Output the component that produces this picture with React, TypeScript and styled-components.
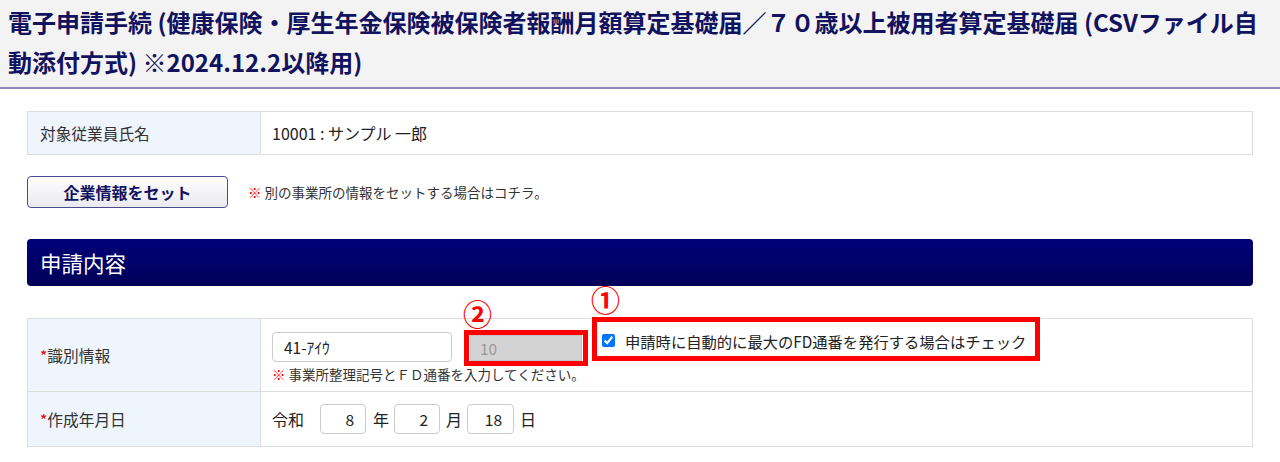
import React from 'react'
import styled, { createGlobalStyle } from 'styled-components'

const GlobalStyle = createGlobalStyle`
    html, body {
        margin: 0;
        padding: 0;
        background: #ffffff;
        font-family: "Noto Sans CJK JP", "Noto Sans", sans-serif;
        color: #333333;
    }
`

const StyledPage = styled.div`
    width: 1280px;
    display: flex;
    flex-direction: column;
`

const StyledTitleBand = styled.div`
    background: #f3f3f3;
    border-bottom: 2px solid #8c89bd;
    padding: 2px 0px 5px 8px;
`

const StyledTitle = styled.h1`
    margin: 0;
    font-size: 24px;
    line-height: 40px;
    font-weight: 700;
    color: #12125e;
    white-space: nowrap;
`

const StyledContent = styled.div`
    padding: 22px 27px 0px 27px;
    display: flex;
    flex-direction: column;
`

const StyledTable = styled.table<{ mt?: number }>`
    width: 100%;
    border-collapse: collapse;
    border: 1px solid #dddddd;
    ${props => props.mt !== undefined && `
        margin-top: ${props.mt}px;
    `}
`

const StyledLabelCell = styled.th<{ h: number }>`
    width: 220px;
    height: ${props => props.h}px;
    background: #eef5fc;
    border: 1px solid #dddddd;
    padding: 0px 0px 0px 12px;
    text-align: left;
    font-weight: 400;
    font-size: 15.7px;
    color: #333333;
    vertical-align: middle;
`

const StyledValueCell = styled.td`
    border: 1px solid #dddddd;
    padding: 0px 11px;
    font-size: 16px;
    color: #222222;
    vertical-align: middle;
`

const StyledRequired = styled.span`
    color: #e60000;
`

const StyledActionRow = styled.div`
    display: flex;
    align-items: center;
    margin-top: 21px;
    gap: 20px;
`

const StyledButton = styled.button`
    width: 201px;
    height: 32px;
    border: 1px solid #4b4a8c;
    border-radius: 4px;
    background: linear-gradient(#ffffff, #e9e9ef);
    font-family: inherit;
    font-size: 16px;
    font-weight: 700;
    color: #12125e;
    cursor: pointer;
`

const StyledNote = styled.span`
    font-size: 13.5px;
    color: #333333;
`

const StyledMark = styled.span`
    color: #ff0000;
    font-weight: 700;
    margin-right: 3px;
`

const StyledSectionHeader = styled.div`
    margin-top: 31px;
    height: 47px;
    border-radius: 4px;
    background: linear-gradient(#000078, #000058);
    color: #ffffff;
    font-size: 21.5px;
    display: flex;
    align-items: center;
    padding-left: 13px;
`

const StyledFieldStack = styled.div`
    display: flex;
    flex-direction: column;
    padding: 10px 0px 5px 0px;
`

const StyledInputRow = styled.div`
    display: flex;
    align-items: flex-start;
`

const StyledInput = styled.input<{ w: number; right?: boolean }>`
    box-sizing: border-box;
    width: ${props => props.w}px;
    height: 30px;
    border: 1px solid #cccccc;
    border-radius: 4px;
    padding: 0px 11px;
    font-family: inherit;
    font-size: 15.5px;
    color: #222222;
    background: #ffffff;
    ${props => props.right && `
        text-align: right;
    `}
`

const StyledDisabledInput = styled.input`
    box-sizing: border-box;
    width: 112px;
    height: 26px;
    border: 1px solid #c4c4c4;
    padding: 0px 9px;
    font-family: inherit;
    font-size: 15.5px;
    color: #999999;
    background: #d3d3d3;
`

const StyledAnnotated = styled.span<{ ml: number; mt: number }>`
    position: relative;
    display: inline-flex;
    align-items: center;
    margin-left: ${props => props.ml}px;
    margin-top: ${props => props.mt}px;
`

const StyledFrame = styled.span<{ inset: string }>`
    position: absolute;
    inset: ${props => props.inset};
    border: 5px solid #ff0000;
    pointer-events: none;
`

const StyledCircled = styled.span<{ top: number; left: number }>`
    position: absolute;
    top: ${props => props.top}px;
    left: ${props => props.left}px;
    font-size: 29px;
    line-height: 29px;
    font-weight: 700;
    color: #ff0000;
`

const StyledCheckLabel = styled.label`
    display: inline-flex;
    align-items: center;
    gap: 10px;
    font-size: 15.3px;
    color: #222222;
    line-height: 22px;
    white-space: nowrap;

    input {
        margin: 0;
        width: 13px;
        height: 13px;
    }
`

const StyledHint = styled.div`
    font-size: 13.5px;
    color: #333333;
    margin-top: 2px;
    line-height: 20px;
`

const StyledDateRow = styled.div`
    display: flex;
    align-items: center;
`

const StyledDateUnit = styled.span<{ ml: number; mr: number }>`
    margin-left: ${props => props.ml}px;
    margin-right: ${props => props.mr}px;
    font-size: 16px;
`

const App = () => {
    return (<>
        <GlobalStyle />
        <StyledPage>
            <StyledTitleBand>
                <StyledTitle>
                    電子申請手続 (健康保険・厚生年金保険被保険者報酬月額算定基礎届／７０歳以上被用者算定基礎届 (CSVファイル自<br />
                    動添付方式) ※2024.12.2以降用)
                </StyledTitle>
            </StyledTitleBand>

            <StyledContent>
                <StyledTable>
                    <tbody>
                        <tr>
                            <StyledLabelCell h={42}>対象従業員氏名</StyledLabelCell>
                            <StyledValueCell>10001 : サンプル 一郎</StyledValueCell>
                        </tr>
                    </tbody>
                </StyledTable>

                <StyledActionRow>
                    <StyledButton type="button">企業情報をセット</StyledButton>
                    <StyledNote><StyledMark>※</StyledMark>別の事業所の情報をセットする場合はコチラ。</StyledNote>
                </StyledActionRow>

                <StyledSectionHeader>申請内容</StyledSectionHeader>

                <StyledTable mt={32}>
                    <tbody>
                        <tr>
                            <StyledLabelCell h={72}><StyledRequired>*</StyledRequired>識別情報</StyledLabelCell>
                            <StyledValueCell>
                                <StyledFieldStack>
                                    <StyledInputRow>
                                        <StyledInput w={180} defaultValue="41-ｱｲｳ" />
                                        <StyledAnnotated ml={18} mt={3}>
                                            <StyledDisabledInput disabled value="10" readOnly />
                                            <StyledFrame inset="-5px -6px -5px -6px" />
                                            <StyledCircled top={-36} left={-7}>②</StyledCircled>
                                        </StyledAnnotated>
                                        <StyledAnnotated ml={20} mt={-2}>
                                            <StyledCheckLabel>
                                                <input type="checkbox" defaultChecked />
                                                申請時に自動的に最大のFD通番を発行する場合はチェック
                                            </StyledCheckLabel>
                                            <StyledFrame inset="-13px -14px -9px -10px" />
                                            <StyledCircled top={-45} left={-11}>①</StyledCircled>
                                        </StyledAnnotated>
                                    </StyledInputRow>
                                    <StyledHint><StyledMark>※</StyledMark>事業所整理記号とＦＤ通番を入力してください。</StyledHint>
                                </StyledFieldStack>
                            </StyledValueCell>
                        </tr>
                        <tr>
                            <StyledLabelCell h={54}><StyledRequired>*</StyledRequired>作成年月日</StyledLabelCell>
                            <StyledValueCell>
                                <StyledDateRow>
                                    <StyledDateUnit ml={0} mr={16}>令和</StyledDateUnit>
                                    <StyledInput w={46} right defaultValue="8" />
                                    <StyledDateUnit ml={7} mr={5}>年</StyledDateUnit>
                                    <StyledInput w={46} right defaultValue="2" />
                                    <StyledDateUnit ml={6} mr={5}>月</StyledDateUnit>
                                    <StyledInput w={47} right defaultValue="18" />
                                    <StyledDateUnit ml={6} mr={0}>日</StyledDateUnit>
                                </StyledDateRow>
                            </StyledValueCell>
                        </tr>
                    </tbody>
                </StyledTable>
            </StyledContent>
        </StyledPage>
    </>)
}

export default App
